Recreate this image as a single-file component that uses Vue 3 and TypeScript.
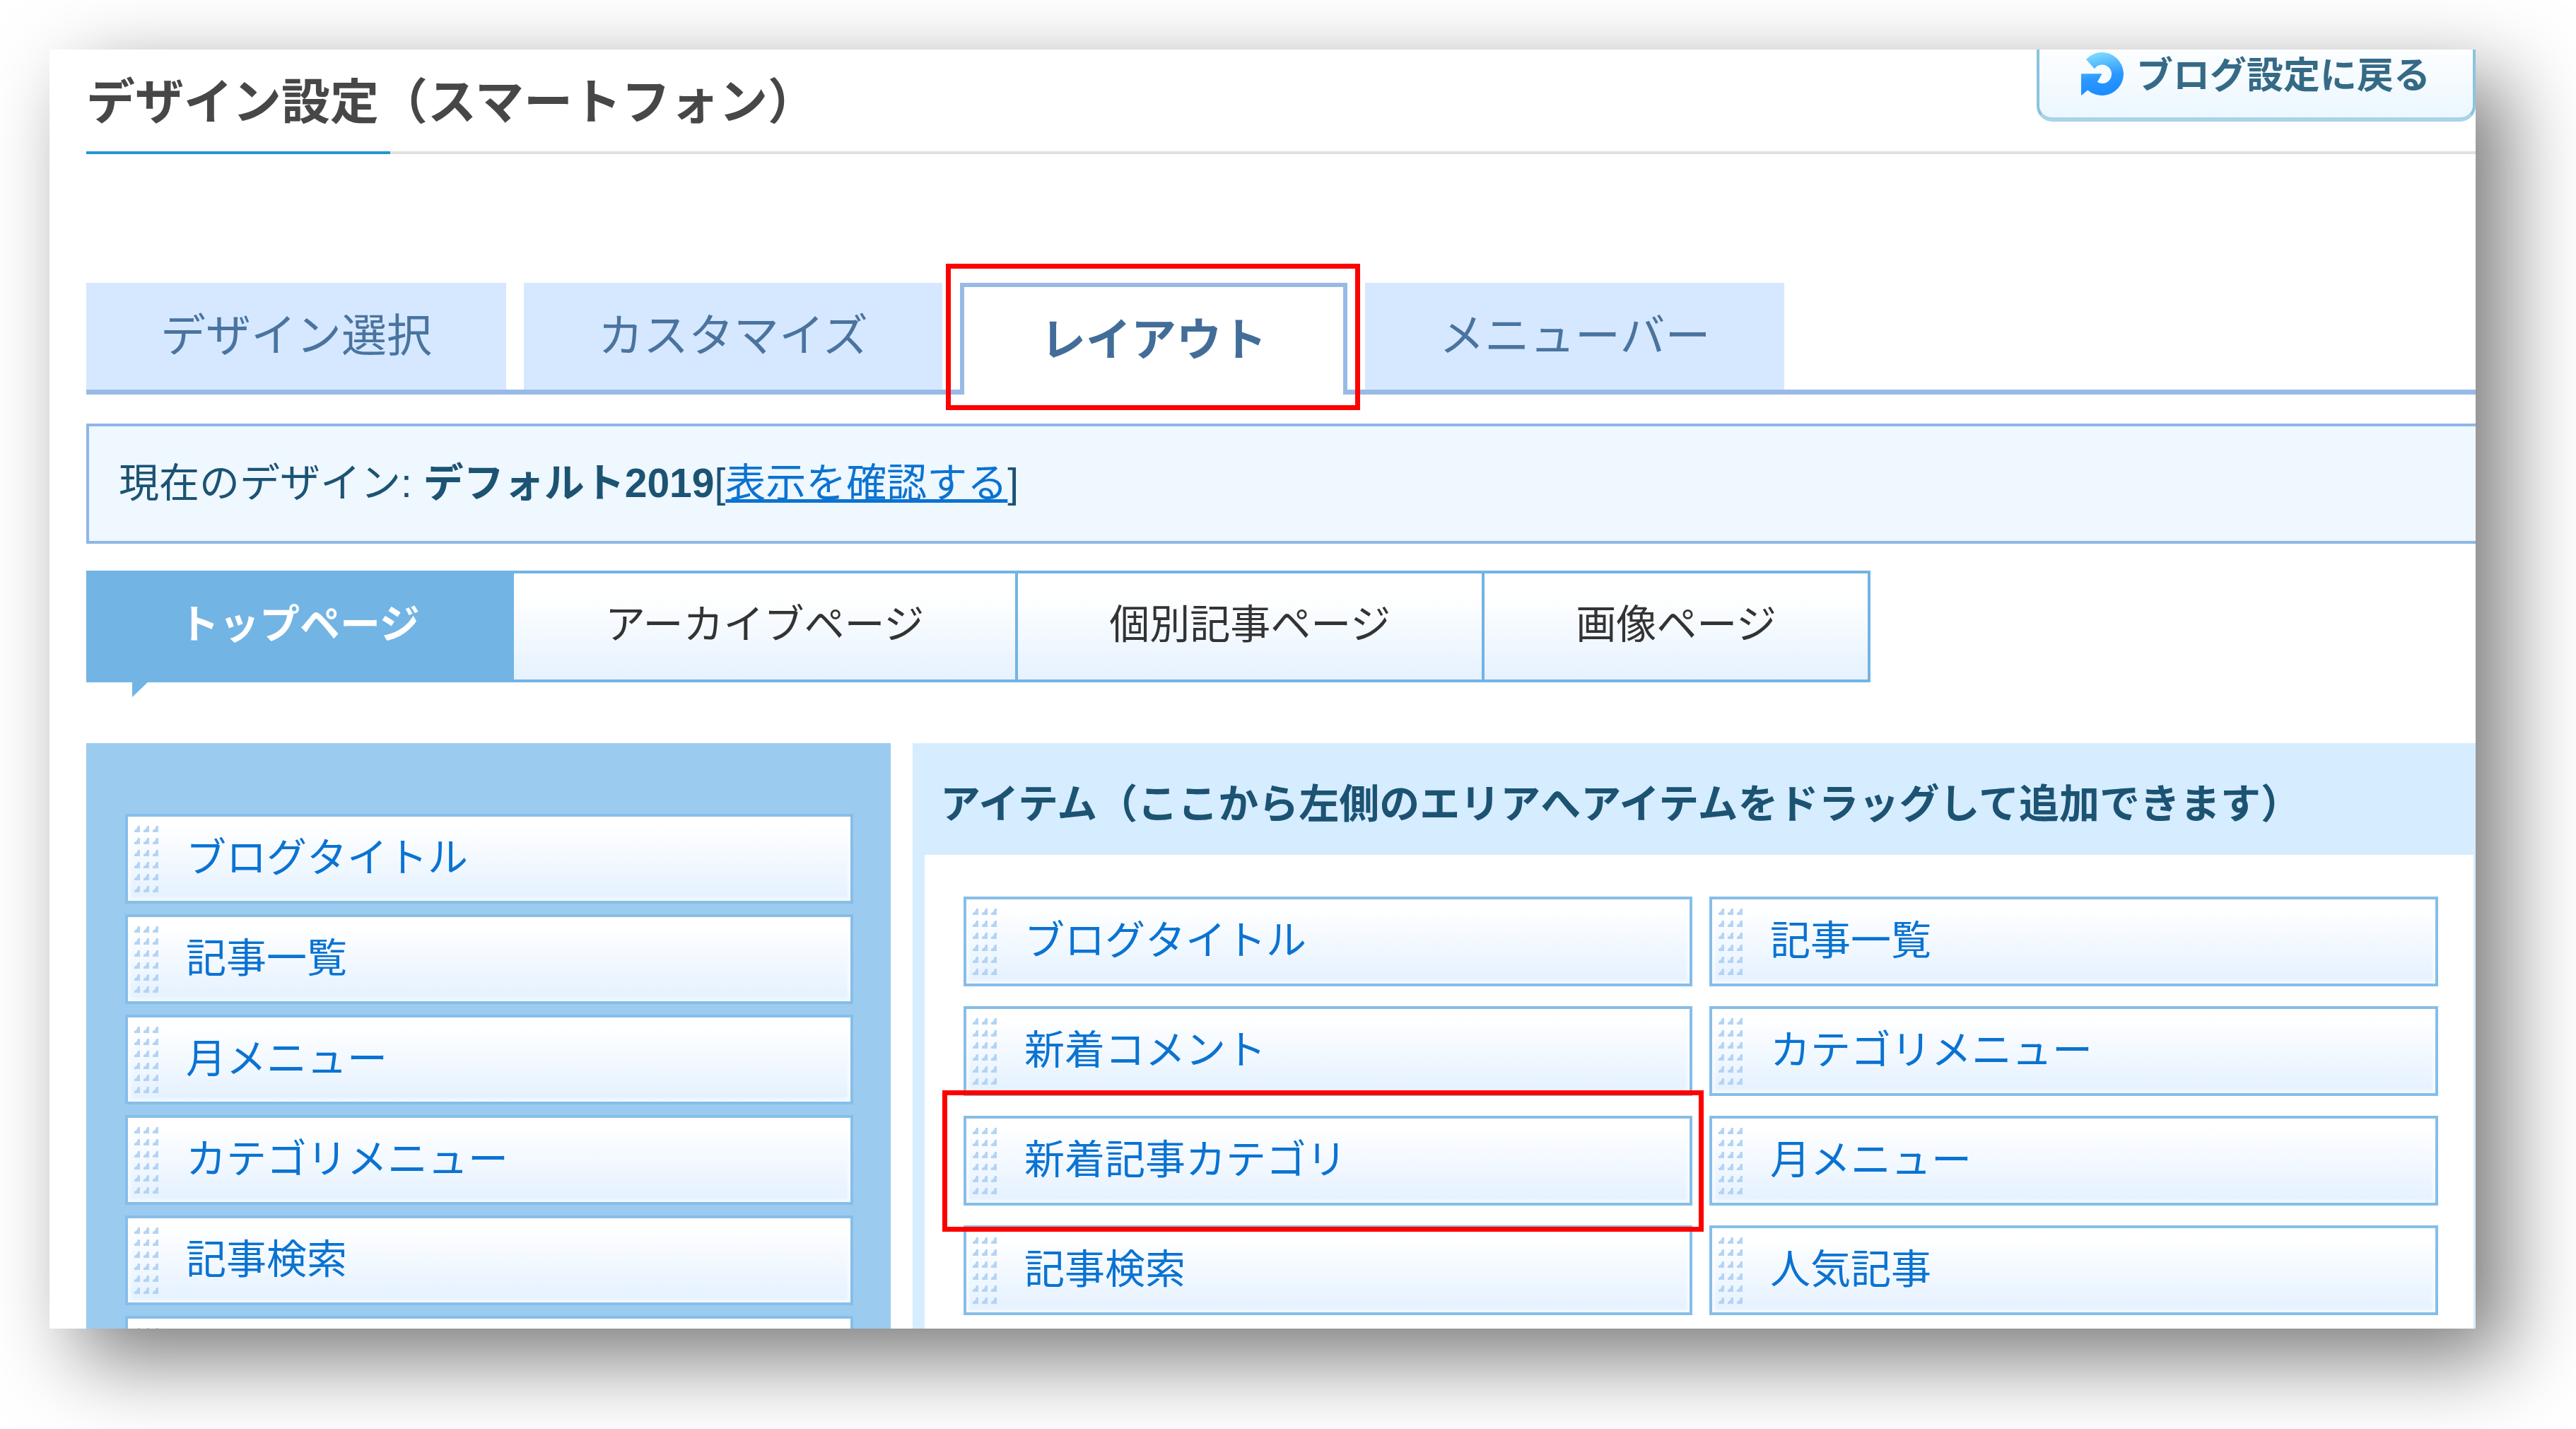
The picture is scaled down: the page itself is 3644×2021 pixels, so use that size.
<script setup lang="ts">
interface Entry {
  label: string
  active?: boolean
  marked?: boolean
}

const tabs: Entry[] = [
  { label: 'デザイン選択' },
  { label: 'カスタマイズ' },
  { label: 'レイアウト', active: true, marked: true },
  { label: 'メニューバー' },
]

const pages: Entry[] = [
  { label: 'トップページ', active: true },
  { label: 'アーカイブページ' },
  { label: '個別記事ページ' },
  { label: '画像ページ' },
]

const placed: string[] = ['ブログタイトル', '記事一覧', '月メニュー', 'カテゴリメニュー', '記事検索', '']

const available: Entry[] = [
  { label: 'ブログタイトル' },
  { label: '記事一覧' },
  { label: '新着コメント' },
  { label: 'カテゴリメニュー' },
  { label: '新着記事カテゴリ', marked: true },
  { label: '月メニュー' },
  { label: '記事検索' },
  { label: '人気記事' },
]
</script>

<template>
  <div class="page">
    <main class="window">
      <header class="head">
        <h1>デザイン設定（スマートフォン）</h1>
        <button type="button" class="back">
          <svg class="back-icon" viewBox="130 68 184 190" aria-hidden="true">
            <defs>
              <linearGradient id="arrowFill" x1="0.2" y1="0" x2="0.4" y2="1">
                <stop offset="0" stop-color="#86e0ff" />
                <stop offset="0.6" stop-color="#2b98ff" />
                <stop offset="1" stop-color="#1a8cff" />
              </linearGradient>
            </defs>
            <path
              fill="url(#arrowFill)"
              d="M154 101A92 92 0 1 1 161 232L133 256V162H222L202 198A40 40 0 1 0 190 141Z"
            />
          </svg>
          <span>ブログ設定に戻る</span>
        </button>
      </header>
      <div class="rule"></div>

      <nav class="tabs">
        <a v-for="t in tabs" :key="t.label" href="#" class="tab" :class="{ active: t.active }">
          {{ t.label }}
          <span v-if="t.marked" class="mark"></span>
        </a>
      </nav>

      <p class="info">現在のデザイン: <strong>デフォルト2019</strong>[<a href="#">表示を確認する</a>]</p>

      <nav class="pages">
        <a v-for="p in pages" :key="p.label" href="#" class="page-tab" :class="{ active: p.active }">{{ p.label }}</a>
      </nav>

      <div class="columns">
        <section class="area">
          <ul class="stack">
            <li v-for="(name, i) in placed" :key="i" class="item" draggable="true">
              <svg class="grip" viewBox="0 0 34 94" aria-hidden="true">
                <template v-for="r in 6" :key="r">
                  <path v-for="c in 3" :key="c" :d="`M${c * 13 - 8} ${r * 17 - 17}h3v9h-8v-3q4-1 5-6z`" />
                </template>
              </svg>
              <span class="name">{{ name }}</span>
            </li>
          </ul>
        </section>

        <section class="library">
          <h2>アイテム（ここから左側のエリアへアイテムをドラッグして追加できます）</h2>
          <ul class="grid">
            <li v-for="a in available" :key="a.label" class="item" draggable="true">
              <svg class="grip" viewBox="0 0 34 94" aria-hidden="true">
                <template v-for="r in 6" :key="r">
                  <path v-for="c in 3" :key="c" :d="`M${c * 13 - 8} ${r * 17 - 17}h3v9h-8v-3q4-1 5-6z`" />
                </template>
              </svg>
              <span class="name">{{ a.label }}</span>
              <span v-if="a.marked" class="mark"></span>
            </li>
          </ul>
        </section>
      </div>
    </main>
  </div>
</template>

<style>
body {
  margin: 0;
  background: #fff;
}
</style>

<style scoped>
.page {
  box-sizing: border-box;
  height: 100vh;
  padding: 70px 142px 142px 70px;
  overflow: hidden;
  font-family: "Liberation Sans", "Noto Sans CJK JP", sans-serif;
  font-size: 57px;
  line-height: 80px;
  color: #1c5373;
}
.window {
  box-sizing: border-box;
  height: 100%;
  padding-left: 52px;
  overflow: hidden;
  background: #fff;
  box-shadow: 42px 42px 110px rgba(0, 0, 0, 0.53);
}
h1,
h2,
p,
ul {
  margin: 0;
  padding: 0;
}
ul {
  list-style: none;
}
.head {
  display: flex;
  justify-content: space-between;
  align-items: flex-start;
}
h1 {
  padding-top: 8px;
  font-size: 69px;
  line-height: 136px;
  font-weight: 700;
  color: #474747;
}
.back {
  display: flex;
  align-items: center;
  gap: 18px;
  padding: 7px 60px 29px 58px;
  border: 4px solid #8cc3e1;
  border-top: 0;
  border-bottom: 6px solid #abd2e6;
  border-radius: 0 0 22px 22px;
  background: linear-gradient(#fcfeff, #ecf7ff);
  font: inherit;
  font-size: 52px;
  line-height: 60px;
  font-weight: 700;
  color: #356a86;
}
.back-icon {
  width: 61px;
  height: 63px;
  margin: -6px 0 0;
}
.rule {
  height: 4px;
  background: linear-gradient(to right, #2496d0 430px, #e0e0e0 430px);
}
.tabs {
  display: flex;
  gap: 25px;
  margin-top: 182px;
  border-bottom: 7px solid #98bae5;
}
.tab {
  position: relative;
  padding: 0 105px;
  background: #d6e8ff;
  font-size: 64px;
  line-height: 151px;
  color: #4a749f;
  text-decoration: none;
}
.tab.active {
  padding: 0 108px;
  margin-bottom: -7px;
  border: 6px solid #98bae5;
  border-bottom: 0;
  background: #fff;
  font-weight: 700;
  color: #436d99;
}
.mark {
  position: absolute;
  z-index: 1;
  border: 7px solid #f00;
}
.tab .mark {
  inset: -33px -24px -22px -26px;
}
.item .mark {
  inset: -40px -20px -41px -34px;
}
.info {
  padding: 40px 42px 42px;
  margin-top: 41px;
  border: 4px solid #8fb7e7;
  border-right: 0;
  background: #eff7ff;
}
.info a {
  color: #0b73d1;
}
.pages {
  display: flex;
  margin-top: 38px;
}
.page-tab {
  position: relative;
  padding: 32px 129px 38px;
  border: 4px solid #72b4e4;
  border-left: 0;
  background: linear-gradient(#fff 20%, #e5f2ff);
  color: #333;
  text-decoration: none;
}
.page-tab.active {
  border-left: 2px solid #72b4e4;
  background: #72b4e4;
  font-weight: 700;
  color: #fff;
}
.page-tab.active::after {
  content: "";
  position: absolute;
  top: 100%;
  left: 63px;
  width: 26px;
  height: 25px;
  background: #72b4e4;
  clip-path: polygon(0 0, 100% 0, 0 100%);
}
.columns {
  display: flex;
  gap: 31px;
  margin-top: 86px;
}
.area {
  box-sizing: border-box;
  flex: 0 0 1138px;
  padding: 100px 53px 53px 55px;
  background: #9bccf0;
}
.stack {
  display: grid;
  gap: 15px;
}
.library {
  flex: 1;
  border: solid #d6ecff;
  border-width: 0 3px 17px 17px;
}
h2 {
  padding: 46px 22px 32px;
  background: #d6ecff;
  font-size: 57px;
  font-weight: 700;
}
.grid {
  display: grid;
  grid-template-columns: 1fr 1fr;
  gap: 28px 24px;
  padding: 59px 50px 59px 55px;
}
.item {
  position: relative;
  box-sizing: border-box;
  display: flex;
  align-items: center;
  gap: 39px;
  height: 127px;
  padding: 0 9px;
  border: 4px solid #86bee8;
  background: linear-gradient(#fff 10%, #e4f1ff);
  box-shadow: inset 0 0 4px 4px rgba(255, 255, 255, 0.6);
  color: #0a73d2;
}
.name {
  padding-bottom: 4px;
}
.grip {
  width: 34px;
  height: 94px;
  fill: #b4d4f5;
}
</style>
